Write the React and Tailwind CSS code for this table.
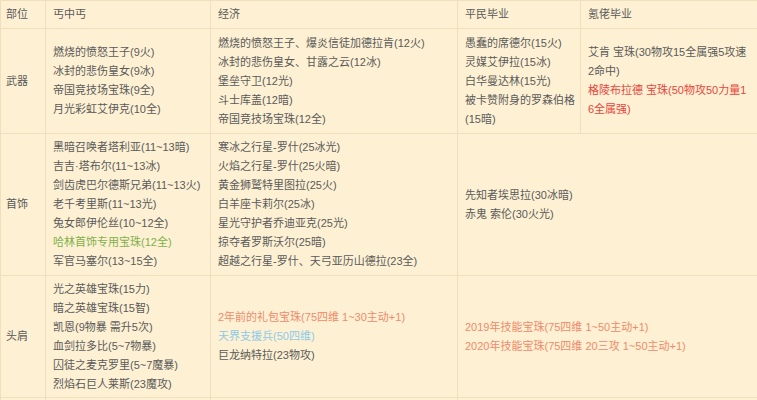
import React from 'react';

const rows = [
  {
    part: '武器',
    cols: [
      [{ t: '燃烧的愤怒王子(9火)' }, { t: '冰封的悲伤皇女(9冰)' }, { t: '帝国竞技场宝珠(9全)' }, { t: '月光彩虹艾伊克(10全)' }],
      [
        { t: '燃烧的愤怒王子、爆炎信徒加德拉肯(12火)' },
        { t: '冰封的悲伤皇女、甘露之云(12冰)' },
        { t: '堡垒守卫(12光)' },
        { t: '斗士库盖(12暗)' },
        { t: '帝国竞技场宝珠(12全)' },
      ],
      [{ t: '愚蠢的席德尔(15火)' }, { t: '灵媒艾伊拉(15冰)' }, { t: '白华曼达林(15光)' }, { t: '被卡赞附身的罗森伯格' }, { t: '(15暗)' }],
      [
        { t: '艾肯 宝珠(30物攻15全属强5攻速' },
        { t: '2命中)' },
        { t: '格陵布拉德 宝珠(50物攻50力量1', c: 'text-[#e8453c]' },
        { t: '6全属强)', c: 'text-[#e8453c]' },
      ],
    ],
    h: 'h-[105px]',
  },
  {
    part: '首饰',
    cols: [
      [
        { t: '黑暗召唤者塔利亚(11~13暗)' },
        { t: '吉吉·塔布尔(11~13冰)' },
        { t: '剑齿虎巴尔德斯兄弟(11~13火)' },
        { t: '老千考里斯(11~13光)' },
        { t: '兔女郎伊伦丝(10~12全)' },
        { t: '哈林首饰专用宝珠(12全)', c: 'text-[#7fb04a]' },
        { t: '军官马塞尔(13~15全)' },
      ],
      [
        { t: '寒冰之行星-罗什(25冰光)' },
        { t: '火焰之行星-罗什(25火暗)' },
        { t: '黄金狮鹫特里图拉(25火)' },
        { t: '白羊座卡莉尔(25冰)' },
        { t: '星光守护者乔迪亚克(25光)' },
        { t: '掠夺者罗斯沃尔(25暗)' },
        { t: '超越之行星-罗什、天弓亚历山德拉(23全)' },
      ],
      [{ t: '先知者埃思拉(30冰暗)' }, { t: '赤鬼 索伦(30火光)' }],
    ],
    h: 'h-[142px]',
  },
  {
    part: '头肩',
    cols: [
      [
        { t: '光之英雄宝珠(15力)' },
        { t: '暗之英雄宝珠(15智)' },
        { t: '凯恩(9物暴 需升5次)' },
        { t: '血剑拉多比(5~7物暴)' },
        { t: '囚徒之麦克罗里(5~7魔暴)' },
        { t: '烈焰石巨人莱斯(23魔攻)' },
      ],
      [
        { t: '2年前的礼包宝珠(75四维 1~30主动+1)', c: 'text-[#f08a6c]' },
        { t: '天界支援兵(50四维)', c: 'text-[#8ccbe8]' },
        { t: '巨龙纳特拉(23物攻)' },
      ],
      [
        { t: '2019年技能宝珠(75四维 1~50主动+1)', c: 'text-[#f08a6c]' },
        { t: '2020年技能宝珠(75四维 20三攻 1~50主动+1)', c: 'text-[#f08a6c]' },
      ],
    ],
    h: 'h-[122px]',
  },
];

function Lines({ items }) {
  return (
    <div className="flex flex-col">
      {items.map((it, i) => (
        <div key={i} className={'whitespace-nowrap ' + (it.c || '')}>
          {it.t}
        </div>
      ))}
    </div>
  );
}

export default function App() {
  const cell = 'border border-[#f0dfbd] align-middle px-[7px]';
  return (
    <div className="w-[757px] h-[400px] overflow-hidden bg-[#fef1d3] text-[#5a5a5a] text-[11px] leading-[19px] font-['Liberation_Sans','Noto_Sans_CJK_SC',sans-serif]">
      <table className="table-fixed border-collapse w-[757px]">
        <colgroup>
          <col className="w-[45px]" />
          <col className="w-[165px]" />
          <col className="w-[247px]" />
          <col className="w-[123px]" />
          <col className="w-[177px]" />
        </colgroup>
        <thead>
          <tr className="h-[28px]">
            <th className="border border-[#f0dfbd] px-[5px] text-left font-normal">部位</th>
            <th className={cell + ' text-left font-normal'}>丐中丐</th>
            <th className={cell + ' text-left font-normal'}>经济</th>
            <th className={cell + ' text-left font-normal'}>平民毕业</th>
            <th className={cell + ' text-left font-normal'}>氪佬毕业</th>
          </tr>
        </thead>
        <tbody>
          {rows.map((r) => (
            <tr key={r.part} className={r.h}>
              <td className="border border-[#f0dfbd] px-[5px] align-middle">{r.part}</td>
              {r.cols.map((c, i) => (
                <td
                  key={i}
                  colSpan={r.cols.length === 3 && i === 2 ? 2 : 1}
                  className={cell}
                >
                  <Lines items={c} />
                </td>
              ))}
            </tr>
          ))}
          <tr className="h-[30px]">
            <td className="border border-[#f0dfbd]" />
            <td className="border border-[#f0dfbd]" />
            <td className="border border-[#f0dfbd]" />
            <td className="border border-[#f0dfbd]" colSpan={2} />
          </tr>
        </tbody>
      </table>
    </div>
  );
}
